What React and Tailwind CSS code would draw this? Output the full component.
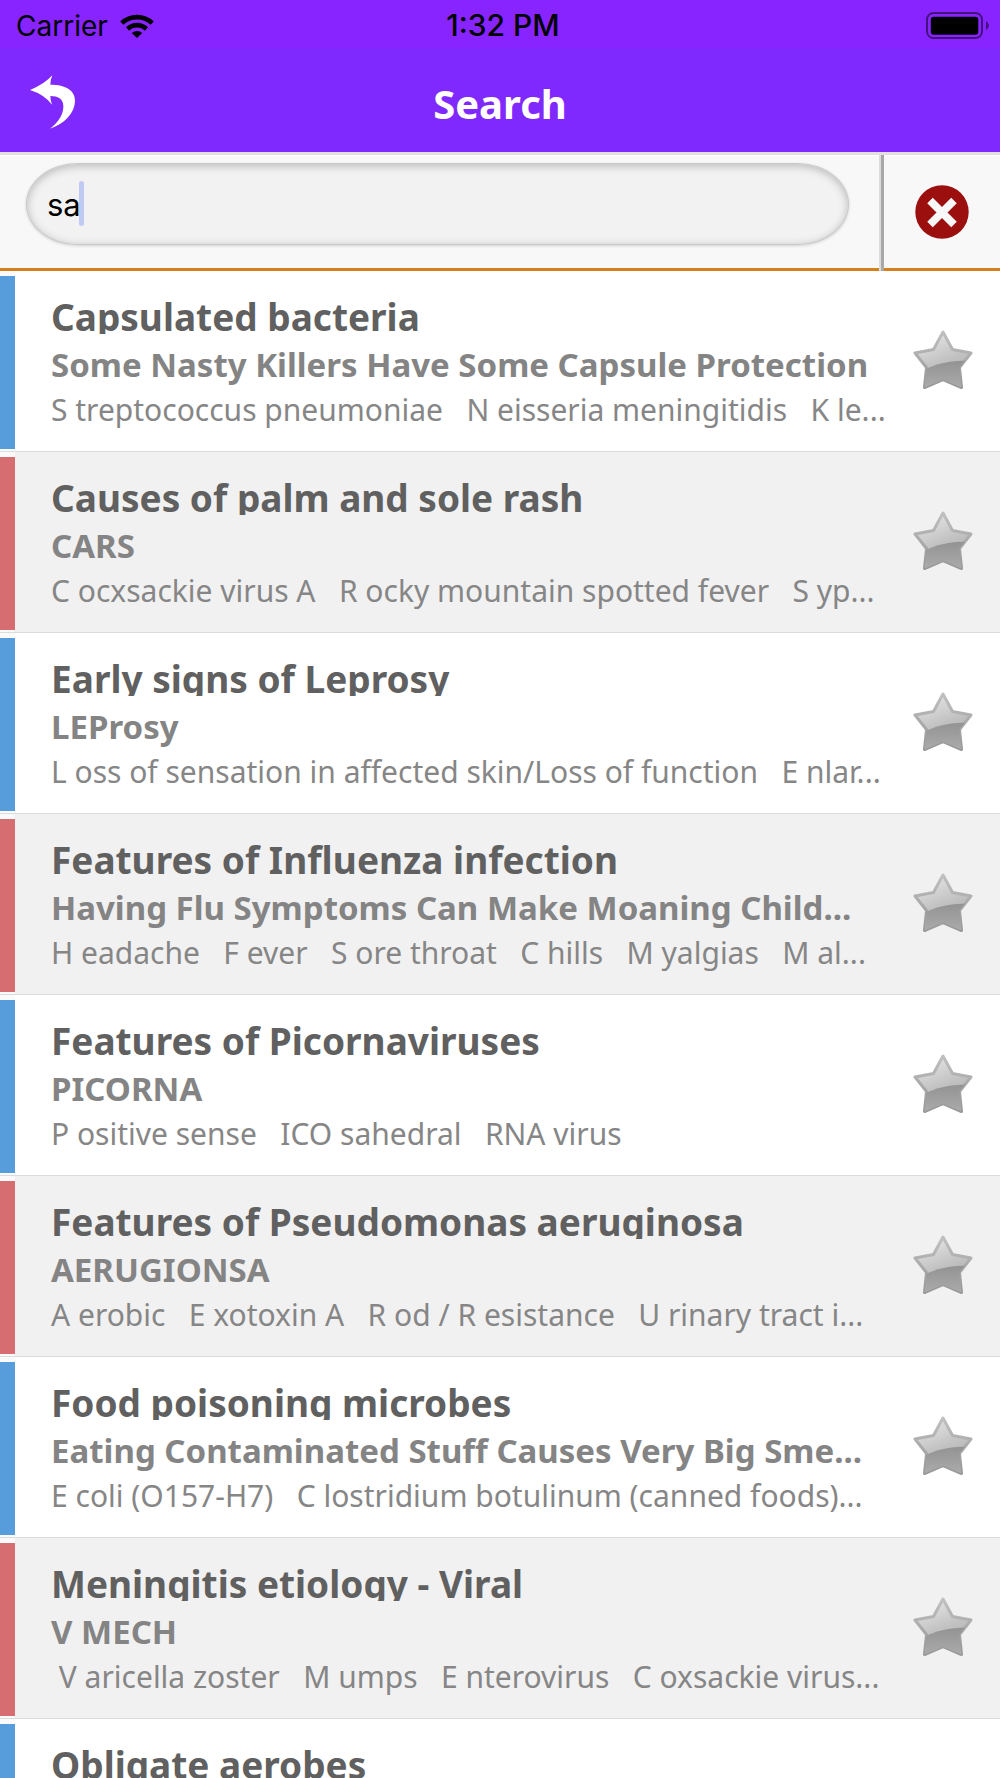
import React, { useState } from 'react';

const items = [
  {
    title: 'Capsulated bacteria',
    mnemonic: 'Some Nasty Killers Have Some Capsule Protection',
    details: 'S treptococcus pneumoniae   N eisseria meningitidis   K le...',
  },
  {
    title: 'Causes of palm and sole rash',
    mnemonic: 'CARS',
    details: 'C ocxsackie virus A   R ocky mountain spotted fever   S yp...',
  },
  {
    title: 'Early signs of Leprosy',
    mnemonic: 'LEProsy',
    details: 'L oss of sensation in affected skin/Loss of function   E nlar...',
  },
  {
    title: 'Features of Influenza infection',
    mnemonic: 'Having Flu Symptoms Can Make Moaning Child...',
    details: 'H eadache   F ever   S ore throat   C hills   M yalgias   M al...',
  },
  {
    title: 'Features of Picornaviruses',
    mnemonic: 'PICORNA',
    details: 'P ositive sense   ICO sahedral   RNA virus',
  },
  {
    title: 'Features of Pseudomonas aeruginosa',
    mnemonic: 'AERUGIONSA',
    details: 'A erobic   E xotoxin A   R od / R esistance   U rinary tract i...',
  },
  {
    title: 'Food poisoning microbes',
    mnemonic: 'Eating Contaminated Stuff Causes Very Big Sme...',
    details: 'E coli (O157-H7)   C lostridium botulinum (canned foods)...',
  },
  {
    title: 'Meningitis etiology - Viral',
    mnemonic: 'V MECH',
    details: ' V aricella zoster   M umps   E nterovirus   C oxsackie virus...',
  },
  { title: 'Obligate aerobes' },
];

function WifiIcon() {
  return (
    <svg width="34" height="24" viewBox="0 0 34 24" aria-hidden="true">
      <g fill="none" stroke="#000" strokeWidth="4.6">
        <path d="M1.8 9.2 A22 22 0 0 1 32.2 9.2" />
        <path d="M7.6 15 A13.4 13.4 0 0 1 26.4 15" />
      </g>
      <path d="M11.8 19 A7.6 7.6 0 0 1 22.2 19 L17 24 Z" />
    </svg>
  );
}

function BatteryIcon() {
  return (
    <svg width="64" height="28" viewBox="0 0 64 28" aria-hidden="true">
      <rect x="1" y="1" width="55" height="25" rx="6.5" fill="none" stroke="#000" strokeOpacity="0.5" strokeWidth="2" />
      <rect x="4.8" y="4.8" width="47.5" height="18" rx="3" />
      <path d="M60 9 Q66 13.500 60 18 Z" fillOpacity="0.5" />
    </svg>
  );
}

function BackIcon() {
  return (
    <svg width="46" height="54" viewBox="92 223 138 162" aria-hidden="true">
      <path
        d="M92 268 Q136 250 159 224 Q153 238 153 252 C200 252 228 270 227 301 C226 338 196 369 152 384 C180 362 193 338 192 315 C191 294 176 286 153 286 Q153 299 158 312 Q134 281 92 268 Z"
        fill="#fff"
      />
    </svg>
  );
}

function ClearIcon() {
  return (
    <svg width="54" height="54" viewBox="0 0 54 54" aria-hidden="true">
      <circle cx="27" cy="27" r="26.700" fill="#9c0f0f" />
      <path d="M15 15.500 L39 39.500 M39 15.500 L15 39.500" stroke="#f8f8f8" strokeWidth="7.8" />
    </svg>
  );
}

function StarIcon() {
  return (
    <svg width="60" height="60" viewBox="0 0 60 60" aria-hidden="true">
      <defs>
        <linearGradient id="starTop" x1="0.2" y1="0" x2="0.6" y2="1">
          <stop offset="0" stopColor="#e8e8e8" />
          <stop offset="0.55" stopColor="#c2c2c2" />
          <stop offset="1" stopColor="#a8a8a8" />
        </linearGradient>
        <linearGradient id="starShade" x1="0" y1="0" x2="0" y2="1">
          <stop offset="0" stopColor="#939393" />
          <stop offset="1" stopColor="#adadad" />
        </linearGradient>
        <linearGradient id="starEdge" x1="0" y1="0" x2="0" y2="1">
          <stop offset="0" stopColor="#c0c0c0" />
          <stop offset="1" stopColor="#979797" />
        </linearGradient>
        <clipPath id="starClip">
          <path d="M30 2 L39.500 19.500 L58 23 L46.500 37.500 L48.500 57.500 L30 49.500 L11.500 57.500 L13.500 37.500 L2 23 L20.500 19.500 Z" />
        </clipPath>
      </defs>
      <path
        d="M30 2 L39.500 19.500 L58 23 L46.500 37.500 L48.500 57.500 L30 49.500 L11.500 57.500 L13.500 37.500 L2 23 L20.500 19.500 Z"
        fill="url(#starTop)"
        stroke="url(#starEdge)"
        strokeWidth="3"
        strokeLinejoin="round"
      />
      <path d="M13 39 C24 34 38 30 54 31 L50 60 L10 60 Z" fill="url(#starShade)" clipPath="url(#starClip)" />
    </svg>
  );
}

function ResultRow({ item, index }) {
  const odd = index % 2 === 1;
  return (
    <li className={`flex min-h-[181px] border-b border-[#dcdcdc] ${odd ? 'bg-[#f1f1f1]' : 'bg-white'}`}>
      <div className="flex w-[15px] shrink-0 bg-[#fafafa] pt-[5px] pb-[2px]">
        <div className={`flex-1 ${odd ? 'bg-[#d66d70]' : 'bg-[#579ddb]'}`} />
      </div>
      <a href="#" className="block min-w-0 flex-1 whitespace-pre pt-[29px] pl-9">
        <h2 className="overflow-hidden text-[37px] leading-[34px] font-bold text-[#606060]">{item.title}</h2>
        {item.mnemonic && (
          <p className="mt-2 text-[33px] leading-[46px] font-bold text-[#848484]">{item.mnemonic}</p>
        )}
        {item.details && <p className="mt-1 text-[30px] leading-9 text-[#868686]">{item.details}</p>}
      </a>
      <button
        type="button"
        aria-label="Favourite"
        className="flex w-[100px] shrink-0 items-center justify-end pr-[27px] pb-[2px]"
      >
        <StarIcon />
      </button>
    </li>
  );
}

export default function App() {
  const [query, setQuery] = useState('sa');

  return (
    <div className="flex h-screen flex-col overflow-hidden bg-white font-['Noto_Sans',sans-serif]">
      <div className="grid h-12 shrink-0 grid-cols-[1fr_auto_1fr] items-center bg-[#8824ff] pt-[3px] pr-[10px] pl-4 font-['Inter',sans-serif] text-[28px] text-black">
        <div className="flex items-center gap-3">
          <span>Carrier</span>
          <WifiIcon />
        </div>
        <span className="text-[30px] font-medium">1:32 PM</span>
        <div className="flex justify-end">
          <BatteryIcon />
        </div>
      </div>

      <header className="grid h-[107px] shrink-0 grid-cols-[1fr_auto_1fr] items-center border-b-3 border-[#e4dede] bg-[#8029ff] px-[30px] pt-1">
        <button type="button" aria-label="Back" className="justify-self-start">
          <BackIcon />
        </button>
        <h1 className="pt-1 text-[40px] leading-none font-bold text-white">Search</h1>
      </header>

      <form className="flex h-[116px] shrink-0" onSubmit={(e) => e.preventDefault()}>
        <div className="flex-1 border-t border-b-3 border-t-white border-b-[#d4801c] bg-[#f8f8f8] pt-[7px] pr-[30px] pl-[26px]">
          <div className="relative">
            <input
              type="text"
              aria-label="Search text"
              value={query}
              onChange={(e) => setQuery(e.target.value)}
              className="h-[82px] w-full rounded-[52px/41px] border border-[#cacaca] bg-[#f2f2f2] px-5 font-['Inter',sans-serif] text-[31px] text-black shadow-[inset_0_2px_8px_#b8b8b8,0_1px_3px_#d0d0d0] outline-none"
            />
            <span className="absolute top-[18px] left-[53px] h-[45px] w-[5px] rounded-sm bg-[#c0c8f4]" />
          </div>
        </div>
        <div className="w-[5px] border-r-3 border-[#a8a8a8] bg-[#dcdcdc]" />
        <button
          type="button"
          aria-label="Clear"
          onClick={() => setQuery('')}
          className="flex w-[116px] items-center justify-center border-t border-b-3 border-t-white border-b-[#d4801c] bg-[#f8f8f8]"
        >
          <ClearIcon />
        </button>
      </form>

      <ul className="min-h-0 flex-1 overflow-y-auto [scrollbar-width:none]">
        {items.map((item, index) => (
          <ResultRow key={item.title} item={item} index={index} />
        ))}
      </ul>
    </div>
  );
}
